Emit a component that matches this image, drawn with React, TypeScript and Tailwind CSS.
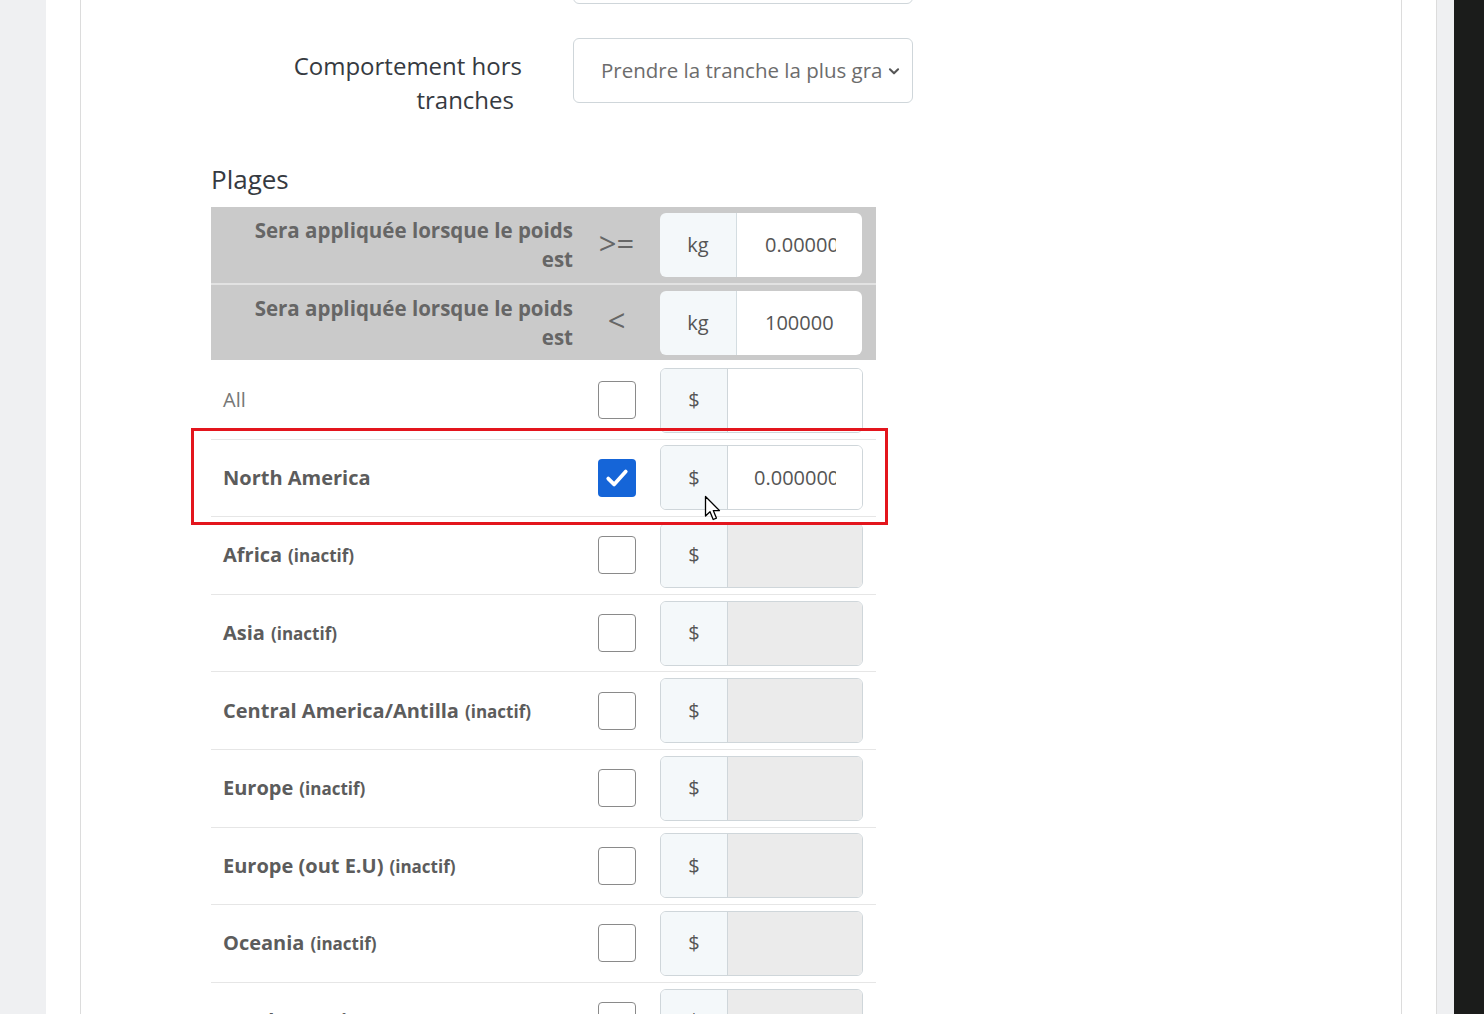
import React from "react";

const zones = [
  { name: "All", plain: true, checked: false, value: "", active: true },
  { name: "North America", checked: true, value: "0.000000", active: true },
  { name: "Africa", checked: false, value: "", active: false },
  { name: "Asia", checked: false, value: "", active: false },
  { name: "Central America/Antilla", checked: false, value: "", active: false },
  { name: "Europe", checked: false, value: "", active: false },
  { name: "Europe (out E.U)", checked: false, value: "", active: false },
  { name: "Oceania", checked: false, value: "", active: false },
  { name: "South America", checked: false, value: "", active: false },
];

function Checkbox({ checked }: { checked: boolean }) {
  if (checked) {
    return (
      <span className="w-[38px] h-[38px] rounded-[4px] bg-[#1565d8] flex items-center justify-center">
        <svg width="28" height="28" viewBox="0 0 24 24" fill="none" stroke="white" strokeWidth="3.2" strokeLinecap="round" strokeLinejoin="round">
          <polyline points="4.5 12.5 9.5 17.5 19.5 6.5" />
        </svg>
      </span>
    );
  }
  return <span className="w-[38px] h-[38px] rounded-[4px] border border-[#8a8a8a] bg-white" />;
}

function Cursor() {
  return (
    <svg className="absolute left-[704px] top-[495px]" width="20" height="28" viewBox="0 0 20 28">
      <path d="M1.5 1.5 L1.5 21 L6 16.8 L9.2 24.5 L12.4 23.1 L9.3 15.6 L15.5 15.6 Z" fill="white" stroke="black" strokeWidth="1.3" strokeLinejoin="round" />
    </svg>
  );
}

function HeaderRow({ op, value, first }: { op: string; value: string; first?: boolean }) {
  return (
    <div className={`flex bg-[#cacaca] ${first ? "h-[76px]" : "h-[77px] border-t-2 border-[#e2e2e2]"}`}>
      <div className="w-[374px] pr-3 flex items-center justify-end text-right text-[20.5px] leading-[29px] font-bold text-[#666]">
        <span className="w-[340px]">Sera appliquée lorsque le poids est</span>
      </div>
      <div className="w-[63px] flex items-center justify-center text-[31px] text-[#666] -mt-[4px]">{op}</div>
      <div className="pl-3 flex items-center">
        <div className="flex h-[64px] w-[202px] rounded-[6px] overflow-hidden">
          <div className="w-[77px] shrink-0 bg-[#f4f8fa] border-r border-[#d4dde1] flex items-center justify-center text-[20px] text-[#555]">kg</div>
          <div className="flex-1 min-w-0 bg-white flex items-center pl-[28px] pr-[26px] text-[20px] text-[#555]">
            <span className="min-w-0 overflow-hidden whitespace-nowrap">{value}</span>
          </div>
        </div>
      </div>
    </div>
  );
}

export default function App() {
  return (
    <div className="h-[1014px] w-[1484px] overflow-hidden flex bg-[#eff0f2] font-['Open_Sans',sans-serif]">
      <div className="w-[46px] shrink-0" />
      <div className="w-[1391px] shrink-0 bg-white border-r border-[#dcdcdc] px-[34px] flex">
        <div className="flex-1 border-x border-[#dcdcdc] relative">
          {/* previous field edge */}
          <div className="ml-[492px] w-[340px] h-[64px] -mt-[60px] border border-[#cfd6da] rounded-[6px]" />

          <div className="flex mt-[34px]">
            <div className="w-[456px] pr-[15px] text-right text-[24px] leading-[34px] text-[#363a41] pt-[11px]">
              <div>Comportement hors</div>
              <div className="pr-[8px]">tranches</div>
            </div>
            <div className="ml-[36px] w-[340px] h-[65px] border border-[#cfd6da] rounded-[6px] flex items-center pl-[27px] pr-[11px]">
              <span className="flex-1 min-w-0 overflow-hidden whitespace-nowrap text-[20.5px] text-[#6c6c6c]">Prendre la tranche la plus gra</span>
              <svg width="14" height="14" viewBox="0 0 24 24" fill="none" stroke="#555" strokeWidth="3.5" strokeLinecap="round" strokeLinejoin="round" className="ml-1 shrink-0">
                <polyline points="5 9 12 16 19 9" />
              </svg>
            </div>
          </div>

          <div className="ml-[130px] w-[665px] mt-[45px]">
            <div className="text-[26px] leading-[34px] text-[#363a41] mb-[11px]">Plages</div>
            <HeaderRow op=">=" value="0.000000" first />
            <HeaderRow op="<" value="100000" />
            <div className="h-[2px]" />
            {zones.map((z) => (
              <div key={z.name} className="flex h-[77.6px] border-b border-[#e6e6e6]">
                <div className="w-[374px] pl-3 flex items-center">
                  {z.plain ? (
                    <span className="text-[20px] text-[#777]">{z.name}</span>
                  ) : (
                    <span className="text-[20px] font-bold text-[#5c5c5c]">
                      {z.name}
                      {!z.active && <span className="text-[17px] ml-[6px]">(inactif)</span>}
                    </span>
                  )}
                </div>
                <div className="w-[63px] flex items-center justify-center">
                  <Checkbox checked={z.checked} />
                </div>
                <div className="pl-3 flex items-center">
                  <div className="flex h-[65px] w-[203px] rounded-[6px] border border-[#cfd6da] overflow-hidden">
                    <div className="w-[67px] shrink-0 bg-[#f4f8fa] border-r border-[#cfd6da] flex items-center justify-center text-[20px] text-[#555]">$</div>
                    <div className={`flex-1 min-w-0 flex items-center pl-[26px] pr-[26px] text-[20px] text-[#555] ${z.active ? "bg-white" : "bg-[#ebebeb]"}`}>
                      <span className="min-w-0 overflow-hidden whitespace-nowrap">{z.value}</span>
                    </div>
                  </div>
                </div>
              </div>
            ))}
          </div>

          <div className="absolute left-[110px] top-[428px] w-[697px] h-[97px] border-[3px] border-[#e3151d]" />
        </div>
      </div>
      <div className="w-[17px] shrink-0" />
      <div className="flex-1 bg-[#1b1c1b]" />
      <Cursor />
    </div>
  );
}
